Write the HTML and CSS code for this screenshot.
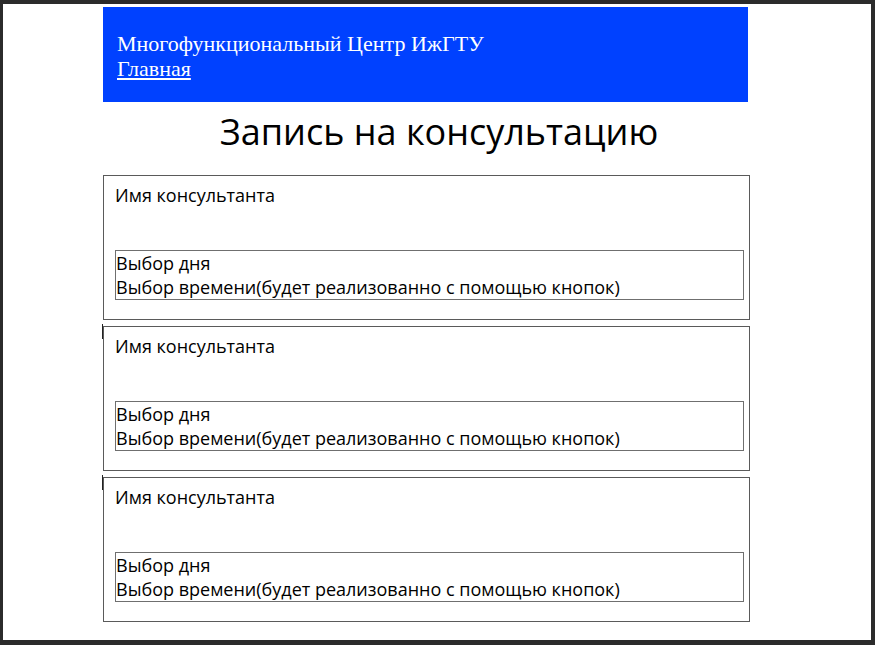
FILE: index.html
```html
<!DOCTYPE html>
<html lang="ru">
<head>
<meta charset="utf-8">
<title>Запись на консультацию</title>
<link rel="stylesheet" href="styles.css">
</head>
<body>
<div class="page">
  <header class="header">
    <div class="brand">Многофункциональный Центр ИжГТУ</div>
    <a class="nav-link" href="#">Главная</a>
  </header>
  <h1 class="title">Запись на консультацию</h1>
  <div class="cards">
    <div class="card">
      <div class="consultant">Имя консультанта</div>
      <div class="picker">
        <div>Выбор дня</div>
        <div>Выбор времени(будет реализованно с помощью кнопок)</div>
      </div>
    </div>
    <div class="card card-mark">
      <div class="consultant">Имя консультанта</div>
      <div class="picker">
        <div>Выбор дня</div>
        <div>Выбор времени(будет реализованно с помощью кнопок)</div>
      </div>
    </div>
    <div class="card card-mark">
      <div class="consultant">Имя консультанта</div>
      <div class="picker">
        <div>Выбор дня</div>
        <div>Выбор времени(будет реализованно с помощью кнопок)</div>
      </div>
    </div>
  </div>
</div>
</body>
</html>
```
FILE: styles.css
```css
html, body {
  margin: 0;
  padding: 0;
}
body {
  background: #2b2b2b;
  width: 875px;
  height: 645px;
  overflow: hidden;
  padding: 4px 4px 5px 3px;
  box-sizing: border-box;
}
.page {
  background: #ffffff;
  height: 636px;
  padding: 3px 0 0 100px;
  box-sizing: border-box;
  font-family: "Open Sans", "Noto Sans", sans-serif;
  color: #000;
}
.header {
  width: 645px;
  height: 95px;
  background: #0041ff;
  box-sizing: border-box;
  padding: 24px 14px 0;
  font-family: "Liberation Serif", "Times New Roman", serif;
  font-size: 22px;
  line-height: 25px;
  color: #fff;
}
.nav-link {
  color: #fff;
  text-decoration: underline;
}
.title {
  margin: 5px 0 0 -100px;
  text-align: center;
  font-weight: normal;
  font-size: 36px;
  line-height: 50px;
  height: 68px;
  padding-left: 4px;
}
.cards {
  display: flex;
  flex-direction: column;
  gap: 6px;
}
.card {
  position: relative;
  width: 647px;
  height: 145px;
  box-sizing: border-box;
  border: 1px solid #5a5a5a;
  padding: 7px 5px 0 11px;
  font-size: 18px;
  line-height: 24px;
}
.card-mark::before {
  content: "";
  position: absolute;
  left: -2px;
  top: -3px;
  width: 1px;
  height: 15px;
  background: #222;
}
.consultant {
  height: 67px;
}
.picker {
  border: 1px solid #6f6f6f;
  height: 50px;
  box-sizing: border-box;
}
```
